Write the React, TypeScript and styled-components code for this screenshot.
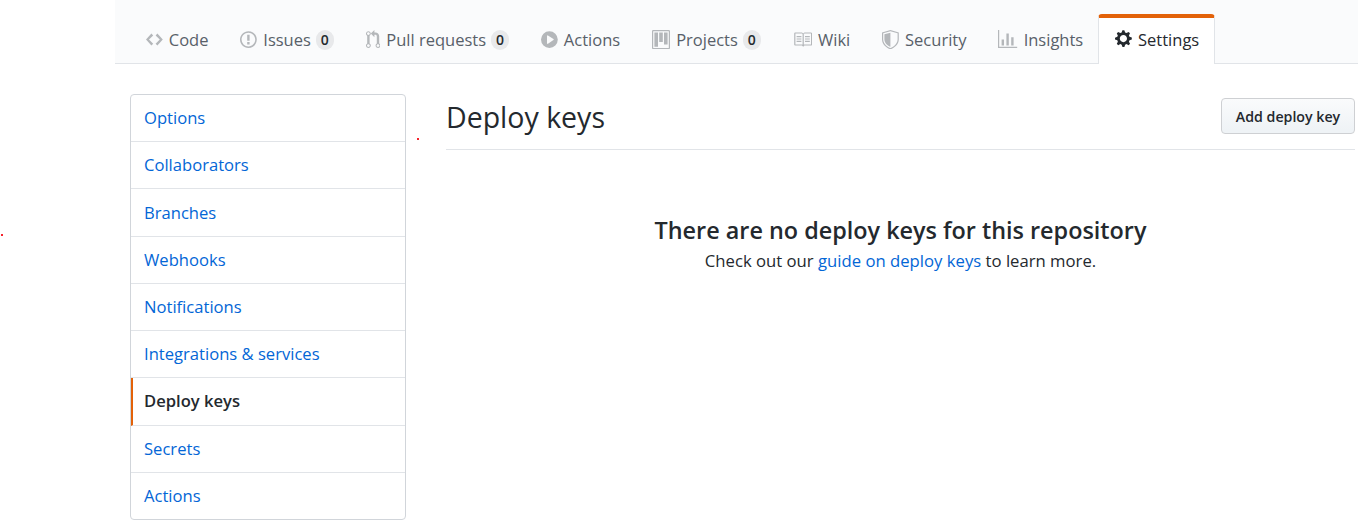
import React from 'react'
import styled, { createGlobalStyle } from 'styled-components'

const GlobalStyle = createGlobalStyle`
  html, body {
    margin: 0;
    background: #fff;
    color: #24292e;
    font-family: "Open Sans", "Noto Sans", sans-serif;
    overflow: hidden;
  }
`

const Page = styled.div`
  position: relative;
  width: 1358px;
  height: 523px;
  overflow: hidden;
`

const TabBar = styled.nav`
  display: flex;
  align-items: flex-end;
  height: 64px;
  margin-left: 115px;
  padding-left: 31px;
  box-sizing: border-box;
  background: #fafbfc;
  border-bottom: 1px solid #e1e4e8;
`

const Tab = styled.a`
  display: flex;
  align-items: center;
  height: 47px;
  margin-right: 32px;
  box-sizing: border-box;
  font-size: 16.5px;
  color: #586069;
  white-space: nowrap;
`

const ActiveTab = styled(Tab)`
  height: 50px;
  width: 117px;
  margin: 0 0 -1px -17px;
  padding: 0 15px 4px 16px;
  background: #fff;
  color: #24292e;
  border: 1px solid #e1e4e8;
  border-top: 4px solid #e36209;
  border-bottom: 0;
  border-radius: 4px 4px 0 0;
`

const TabIcon = styled.svg<{ $dark?: boolean }>`
  height: 19.2px;
  margin-right: 6px;
  fill: ${props => (props.$dark ? '#24292e' : '#b4b7ba')};
  flex: none;
`

const Counter = styled.span`
  display: inline-block;
  min-width: 18px;
  margin-left: 5px;
  text-align: center;
  font-size: 14px;
  font-weight: 600;
  line-height: 20px;
  color: #24292e;
  background: rgba(27, 31, 35, 0.08);
  border-radius: 10px;
`

const Main = styled.div`
  display: flex;
  align-items: flex-start;
  padding: 30px 3px 0 130px;
`

const SideMenu = styled.ul`
  width: 276px;
  margin: 0 40px 0 0;
  padding: 0;
  box-sizing: border-box;
  list-style: none;
  flex: none;
  border: 1px solid #d1d5da;
  border-radius: 4px;
`

const SideItem = styled.li<{ $selected?: boolean }>`
  display: flex;
  align-items: center;
  height: 47.22px;
  padding: 0 0 1px ${props => (props.$selected ? '11px' : '13px')};
  box-sizing: border-box;
  font-size: 16.6px;
  font-weight: ${props => (props.$selected ? 600 : 400)};
  color: ${props => (props.$selected ? '#24292e' : '#0366d6')};
  border-left: ${props => (props.$selected ? '2px solid #e36209' : '0')};
  border-bottom: 1px solid #e1e4e8;

  &:last-child {
    height: 46.3px;
    border-bottom: 0;
  }
`

const Content = styled.section`
  flex: 1;
  min-width: 0;
`

const Header = styled.header`
  display: flex;
  align-items: center;
  justify-content: space-between;
  height: 56px;
  box-sizing: border-box;
  border-bottom: 1px solid #e1e4e8;
`

const Title = styled.h2`
  margin: 0 0 9px;
  font-size: 28.5px;
  font-weight: 400;
  color: #24292e;
`

const AddButton = styled.button`
  width: 134px;
  height: 36px;
  margin-bottom: 11px;
  padding: 0;
  font: 600 14.2px "Open Sans", sans-serif;
  color: #24292e;
  background: linear-gradient(-180deg, #fafbfc, #eff3f6 90%);
  border: 1px solid #ced0d3;
  border-radius: 4px;
`

const Blankslate = styled.div`
  padding-top: 64px;
  text-align: center;
`

const BlankTitle = styled.h3`
  margin: 0;
  font-size: 23.4px;
  line-height: 32px;
  font-weight: 600;
  color: #24292e;
`

const BlankText = styled.p`
  margin: 0;
  font-size: 16.7px;
  line-height: 30px;
  color: #24292e;
`

const Link = styled.a`
  color: #0366d6;
`

const Speck = styled.i<{ $x: number; $y: number }>`
  position: absolute;
  left: ${props => props.$x}px;
  top: ${props => props.$y}px;
  width: 2px;
  height: 2px;
  background: #f5222d;
`

const icons = {
  code: { w: 14, d: 'M9.5 3L8 4.5 11.5 8 8 11.5 9.5 13 14 8 9.5 3zm-5 0L0 8l4.5 5L6 11.5 2.5 8 6 4.5 4.5 3z' },
  issue: { w: 14, d: 'M7 2.3c3.14 0 5.7 2.56 5.7 5.7s-2.56 5.7-5.7 5.7A5.71 5.71 0 0 1 1.3 8c0-3.14 2.56-5.7 5.7-5.7zM7 1C3.14 1 0 4.14 0 8s3.14 7 7 7 7-3.14 7-7-3.14-7-7-7zm1 3H6v5h2V4zm0 6H6v2h2v-2z' },
  pull: { w: 12, d: 'M11 11.28V5c-.03-.78-.34-1.47-.94-2.06C9.46 2.35 8.78 2.03 8 2H7V0L4 3l3 3V4h1c.27.02.48.11.69.31.21.2.3.42.31.69v6.28A1.993 1.993 0 0 0 10 15a1.993 1.993 0 0 0 1-3.72zm-1 2.92c-.66 0-1.2-.55-1.2-1.2 0-.65.55-1.2 1.2-1.2.65 0 1.2.55 1.2 1.2 0 .65-.55 1.2-1.2 1.2zM4 3c0-1.11-.89-2-2-2a1.993 1.993 0 0 0-1 3.72v6.56A1.993 1.993 0 0 0 2 15a1.993 1.993 0 0 0 1-3.72V4.72c.59-.34 1-.98 1-1.72zm-.8 10c0 .66-.55 1.2-1.2 1.2-.65 0-1.2-.55-1.2-1.2 0-.65.55-1.2 1.2-1.2.65 0 1.2.55 1.2 1.2zM2 4.2C1.34 4.2.8 3.65.8 3c0-.65.55-1.2 1.2-1.2.65 0 1.2.55 1.2 1.2 0 .65-.55 1.2-1.2 1.2z' },
  play: { w: 14, d: 'M14 8A7 7 0 1 1 0 8a7 7 0 0 1 14 0zm-8.223 3.482l4.599-3.066a.5.5 0 0 0 0-.832L5.777 4.518A.5.5 0 0 0 5 4.934v6.132a.5.5 0 0 0 .777.416z' },
  project: { w: 15, d: 'M10 12h3V2h-3v10zm-4-2h3V2H6v8zm-4 4h3V2H2v12zm-1 1h13V1H1v14zM14 0H1a1 1 0 0 0-1 1v14a1 1 0 0 0 1 1h13a1 1 0 0 0 1-1V1a1 1 0 0 0-1-1z' },
  book: { w: 16, d: 'M3 5h4v1H3V5zm0 3h4V7H3v1zm0 2h4V9H3v1zm11-5h-4v1h4V5zm0 2h-4v1h4V7zm0 2h-4v1h4V9zm2-6v9c0 .55-.45 1-1 1H9.5l-1 1-1-1H2c-.55 0-1-.45-1-1V3c0-.55.45-1 1-1h5.5l1 1 1-1H15c.55 0 1 .45 1 1zm-8 .5L7.5 3H2v9h6V3.5zm7-.5H9.5l-.5.5V12h6V3z' },
  shield: { w: 14, d: 'M7 0L0 2v6.02C0 12.69 5.31 16 7 16c1.69 0 7-3.31 7-7.98V2L7 0zM1 2.75L7 1l6 1.75v5.27c0 3.9-4.6 6.98-6 6.98S1 11.92 1 8.02V2.75zM7 2.2L2 3.6v4.4c0 3.2 3.6 5.8 5 6V2.2z' },
  graph: { w: 16, d: 'M16 14v1H0V0h1v14h15zM5 13H3V8h2v5zm4 0H7V3h2v10zm4 0h-2V6h2v7z' },
  gear: { w: 14, d: 'M14 8.77v-1.6l-1.94-.64-.45-1.09.88-1.84-1.13-1.13-1.81.91-1.09-.45-.69-1.92h-1.6l-.63 1.94-1.11.45-1.84-.88-1.13 1.13.91 1.81-.45 1.09L0 7.23v1.59l1.94.64.45 1.09-.88 1.84 1.13 1.13 1.81-.91 1.09.45.69 1.92h1.59l.63-1.94 1.11-.45 1.84.88 1.13-1.13-.92-1.81.47-1.09L14 8.75v.02zM7 11c-1.66 0-3-1.34-3-3s1.34-3 3-3 3 1.34 3 3-1.34 3-3 3z' }
}

type IconName = keyof typeof icons

const Icon = ({ name, dark }: { name: IconName; dark?: boolean }) => (
  <TabIcon viewBox={`0 0 ${icons[name].w} 16`} width={icons[name].w * 1.2} $dark={dark}>
    <path fillRule='evenodd' d={icons[name].d} />
  </TabIcon>
)

const tabs: { label: string; icon: IconName; count?: number }[] = [
  { label: 'Code', icon: 'code' },
  { label: 'Issues', icon: 'issue', count: 0 },
  { label: 'Pull requests', icon: 'pull', count: 0 },
  { label: 'Actions', icon: 'play' },
  { label: 'Projects', icon: 'project', count: 0 },
  { label: 'Wiki', icon: 'book' },
  { label: 'Security', icon: 'shield' },
  { label: 'Insights', icon: 'graph' }
]

const menu = ['Options', 'Collaborators', 'Branches', 'Webhooks', 'Notifications', 'Integrations & services', 'Deploy keys', 'Secrets', 'Actions']

const App: React.FC = () => (
  <Page>
    <GlobalStyle />
    <TabBar>
      {tabs.map(tab => (
        <Tab key={tab.label}>
          <Icon name={tab.icon} />
          {tab.label}
          {tab.count !== undefined && <Counter>{tab.count}</Counter>}
        </Tab>
      ))}
      <ActiveTab>
        <Icon name='gear' dark />
        Settings
      </ActiveTab>
    </TabBar>
    <Main>
      <SideMenu>
        {menu.map(item => (
          <SideItem key={item} $selected={item === 'Deploy keys'}>{item}</SideItem>
        ))}
      </SideMenu>
      <Content>
        <Header>
          <Title>Deploy keys</Title>
          <AddButton>Add deploy key</AddButton>
        </Header>
        <Blankslate>
          <BlankTitle>There are no deploy keys for this repository</BlankTitle>
          <BlankText>Check out our <Link>guide on deploy keys</Link> to learn more.</BlankText>
        </Blankslate>
      </Content>
    </Main>
    <Speck $x={417} $y={138} />
    <Speck $x={1} $y={234} />
  </Page>
)

export default App
